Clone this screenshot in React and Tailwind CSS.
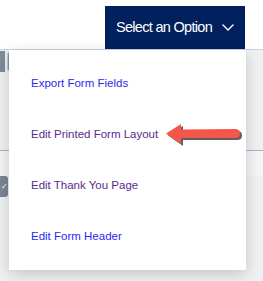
export default function App() {
  const items = [
    { label: 'Export Form Fields', color: 'text-[#2a2af0]' },
    { label: 'Edit Printed Form Layout', color: 'text-[#5b2a8e]', arrow: true },
    { label: 'Edit Thank You Page', color: 'text-[#5b2a8e]' },
    { label: 'Edit Form Header', color: 'text-[#2a2af0]' },
  ];

  return (
    <div className="relative w-[263px] h-[281px] overflow-hidden bg-white" style={{ fontFamily: '"Liberation Sans", Arial, sans-serif' }}>
      {/* page header */}
      <div className="flex justify-end pt-[6px] pr-[18px]">
        <button className="flex items-center justify-between w-[140px] h-[43px] pl-[11px] pr-[11px] bg-[#01205e] text-white text-[14.5px] tracking-[-0.7px]">
          <span>Select an Option</span>
          <svg width="12" height="7" viewBox="0 0 12 7" fill="none" stroke="currentColor" strokeWidth="1.4" strokeLinecap="round" strokeLinejoin="round">
            <path d="M1 1l5 5 5-5" />
          </svg>
        </button>
      </div>

      {/* page content behind the menu */}
      <div className="h-[232px] bg-[#eef0f2] border-t border-[#c9d2dc]">
        <div className="flex items-center gap-[2px] mt-[1px] h-[21px]">
          <div className="w-[5px] h-[21px] bg-[#7e8b9a]" />
          <div className="w-[8px] h-[19px] border border-[#c5ccd6] bg-[#8996a5] rounded-[2px]" />
        </div>
        <div className="mt-[78px] border-t border-[#aab6c5]" />
        <div className="h-[25px] bg-[#f4f5f6]" />
        <div className="flex items-center justify-center w-[8px] h-[21px] rounded-r-[3px] bg-[#7b8594] text-white text-[8px] leading-none">✓</div>
      </div>

      {/* dropdown menu */}
      <div className="absolute left-[9px] top-[50px] w-[237px] h-[220px] bg-white shadow-[0_4px_14px_rgba(0,0,0,0.18)] pt-[8px]">
        {items.map((it) => (
          <div key={it.label} className="relative flex items-center h-[51px] pl-[22px]">
            <span className={`text-[11.5px] ${it.color}`}>{it.label}</span>
            {it.arrow && (
              <svg className="absolute left-[156px] top-[14px]" width="80" height="28" viewBox="0 0 80 28">
                <g transform="translate(2,2)" fill="#2b2b2b" opacity="0.75">
                  <path d="M1 10.5 L16 1 L16 6.5 L71 6 Q75 6.3 75 10.5 Q75 14.7 71 15 L16 15 L16 21 Z" />
                </g>
                <path d="M1 10.5 L16 1 L16 6.5 L71 6 Q75 6.3 75 10.5 Q75 14.7 71 15 L16 15 L16 21 Z" fill="#f4574a" />
              </svg>
            )}
          </div>
        ))}
      </div>
    </div>
  );
}
